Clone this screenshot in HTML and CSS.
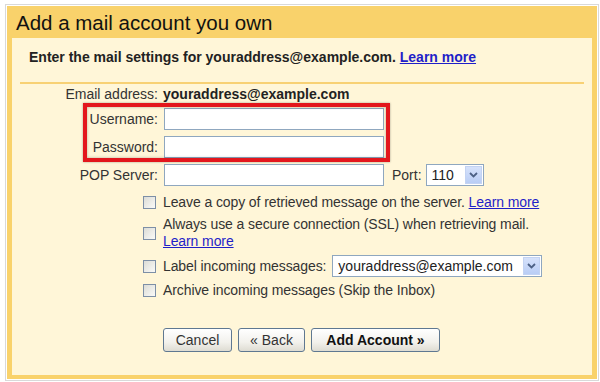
FILE: index.html
```html
<!DOCTYPE html>
<html lang="en">
<head>
  <meta charset="UTF-8" />
  <title>Add a mail account</title>
  <link rel="stylesheet" href="styles.css">
</head>
<body>
  <div class="outer">
    <div class="panel">
      <h2 class="title">Add a mail account you own</h2>

      <div class="content">
        <!-- Intro -->
        <p class="intro">Enter the mail settings for youraddress@example.com. <a href="#">Learn more</a></p>

        <!-- Server settings -->
        <div class="form">
          <span class="label">Email address:</span>
          <span class="value">youraddress@example.com</span>

          <label class="label">Username:</label>
          <span class="field"><span class="input"></span></span>

          <label class="label">Password:</label>
          <span class="field"><span class="input"></span></span>

          <label class="label">POP Server:</label>
          <span class="field">
            <span class="input"></span>
            <span class="port-label">Port:</span>
            <span class="select port"><span class="select-text">110</span><span class="arrow"><svg width="9" height="6" viewBox="0 0 9 6"><path d="M1 1 L4.5 4.5 L8 1" fill="none" stroke="#4d6185" stroke-width="1.8"/></svg></span></span>
          </span>
        </div>

        <!-- Options -->
        <div class="options">
          <div class="option">
            <span class="check"></span>
            <span>Leave a copy of retrieved message on the server. <a href="#">Learn more</a></span>
          </div>
          <div class="option">
            <span class="check"></span>
            <span>Always use a secure connection (SSL) when retrieving mail.<br><a href="#">Learn more</a></span>
          </div>
          <div class="option">
            <span class="check"></span>
            <span>Label incoming messages:</span>
            <span class="select label-select"><span class="select-text">youraddress@example.com</span><span class="arrow"><svg width="9" height="6" viewBox="0 0 9 6"><path d="M1 1 L4.5 4.5 L8 1" fill="none" stroke="#4d6185" stroke-width="1.8"/></svg></span></span>
          </div>
          <div class="option">
            <span class="check"></span>
            <span>Archive incoming messages (Skip the Inbox)</span>
          </div>
        </div>

        <!-- Buttons -->
        <div class="buttons">
          <button class="btn btn-cancel">Cancel</button>
          <button class="btn btn-back">&laquo; Back</button>
          <button class="btn btn-add">Add Account &raquo;</button>
        </div>

        <!-- Highlight -->
        <div class="highlight"></div>
      </div>
    </div>
  </div>
</body>
</html>
```

FILE: styles.css
```css
/* Page */
body {
  margin: 0;
  background: #fff;
  font-family: 'Liberation Sans', Arial, sans-serif;
  font-size: 14px;
  color: #222;
}

.outer {
  margin: 4px 1px 1px 5px;
  border: 1px solid #d9d9d9;
  padding: 1px;
}

.panel {
  background: #f9d26b;
  padding: 0 5px 4px 5px;
}

/* Header */
.title {
  margin: 0;
  height: 32px;
  line-height: 33px;
  padding-left: 4px;
  font-size: 20.5px;
  font-weight: normal;
  color: #111;
}

/* Cream body */
.content {
  position: relative;
  background: #fff6d8;
  padding-bottom: 23px;
}

a {
  color: #1f1fc8;
  text-decoration: underline;
}

.intro {
  margin: 0 8px;
  padding: 10px 9px 16px;
  line-height: 18px;
  font-weight: bold;
  border-bottom: 2px solid #f8d174;
}

/* Form grid */
.form {
  display: grid;
  grid-template-columns: 146px auto;
  column-gap: 6px;
  row-gap: 6px;
  margin-top: 2px;
  align-items: center;
}

.label {
  text-align: right;
  color: #333;
  line-height: 16px;
}

.value {
  font-weight: bold;
  line-height: 16px;
  margin-left: -1px;
}

.field {
  display: flex;
  align-items: center;
}

.input {
  display: block;
  width: 220px;
  height: 22px;
  box-sizing: border-box;
  border: 1px solid #8fa7bf;
  background: #fff;
}

.port-label {
  margin: 0 4px 0 8px;
  color: #333;
}

/* Fake select boxes */
.select {
  display: flex;
  align-items: center;
  justify-content: space-between;
  height: 22px;
  box-sizing: border-box;
  border: 1px solid #8fa7bf;
  background: #fff;
  padding: 1px;
  letter-spacing: 0;
}
.select-text {
  padding-left: 4px;
  color: #222;
}
.arrow {
  display: flex;
  align-items: center;
  justify-content: center;
  width: 17px;
  height: 18px;
  background: linear-gradient(#d6e2fb, #b9cdf5);
  border: 1px solid #c3d3f3;
  box-sizing: border-box;
}
.port {
  width: 58px;
}
.label-select {
  width: 210px;
  margin-left: -1px;
}

/* Checkbox options */
.options {
  margin-top: 8px;
  padding-left: 131px;
  display: flex;
  flex-direction: column;
  gap: 5px;
  color: #333;
  line-height: 17px;
  letter-spacing: -0.1px;
}

.option {
  display: flex;
  align-items: center;
  gap: 7px;
}

.check {
  flex: none;
  width: 13px;
  height: 13px;
  box-sizing: border-box;
  border: 1px solid #7d8fa6;
  background: linear-gradient(135deg, #dcdcd6, #fafaf8);
}

/* Buttons */
.buttons {
  display: flex;
  gap: 6px;
  margin-top: 29px;
  padding-left: 151px;
}

.btn {
  height: 24px;
  box-sizing: border-box;
  border: 1px solid #5f7891;
  border-radius: 3px;
  background: linear-gradient(#ffffff, #f2f1ec 60%, #dedcd2);
  font-family: 'Liberation Sans', Arial, sans-serif;
  font-size: 14px;
  color: #333;
  padding: 0;
}
.btn-cancel { width: 69px; }
.btn-back { width: 67px; }
.btn-add {
  width: 129px;
  font-weight: bold;
  color: #111;
}

/* Red annotation box */
.highlight {
  position: absolute;
  left: 71px;
  top: 65px;
  width: 307px;
  height: 59px;
  box-sizing: border-box;
  border: 4px solid #e3161c;
  box-shadow: 0 0 2px rgba(0, 0, 0, 0.35), inset 0 0 3px rgba(0, 0, 0, 0.3);
}
```
